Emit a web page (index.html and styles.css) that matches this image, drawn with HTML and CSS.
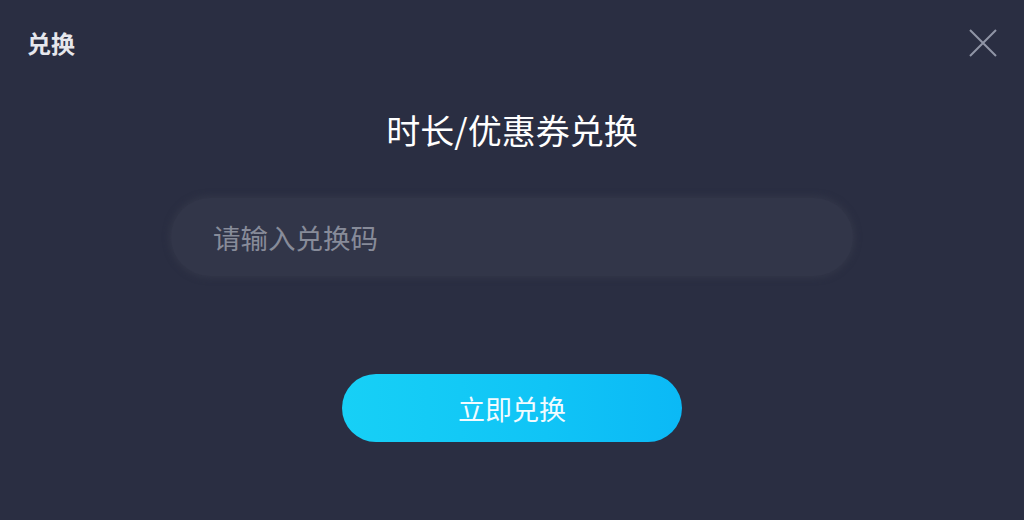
FILE: index.html
```html
<!DOCTYPE html>
<html lang="zh-CN">
<head>
<meta charset="utf-8">
<title>兑换</title>
<link rel="stylesheet" href="styles.css">
</head>
<body>
<div class="dialog">
  <header class="topbar">
    <div class="tab">兑换</div>
    <button class="close" aria-label="关闭">
      <svg width="28" height="28" viewBox="0 0 28 28"><path d="M1 1 L27 27 M27 1 L1 27" stroke="#9095a6" stroke-width="2" fill="none"/></svg>
    </button>
  </header>
  <main class="content">
    <h1 class="heading">时长/优惠券兑换</h1>
    <div class="field">
      <input class="code" type="text" placeholder="请输入兑换码">
    </div>
    <button class="submit">立即兑换</button>
  </main>
</div>
</body>
</html>
```
FILE: styles.css
```css
* { box-sizing: border-box; }
html, body { margin: 0; padding: 0; }
body {
  width: 1024px;
  height: 520px;
  background: #2a2e42;
  font-family: "Noto Sans CJK SC", "Noto Sans", sans-serif;
  overflow: hidden;
}
.dialog {
  width: 1024px;
  height: 520px;
  display: flex;
  flex-direction: column;
}
.topbar {
  display: flex;
  justify-content: space-between;
  align-items: center;
  padding: 27px 27px 0 27px;
  height: 58px;
}
.tab {
  color: #e6e7ec;
  font-size: 24px;
  font-weight: 700;
  line-height: 30px;
}
.close {
  background: none;
  border: 0;
  padding: 0;
  width: 28px;
  height: 28px;
  display: flex;
}
.content {
  display: flex;
  flex-direction: column;
  align-items: center;
}
.heading {
  margin: 49px 0 0 0;
  color: #ffffff;
  font-size: 34px;
  font-weight: 400;
  line-height: 46px;
}
.field {
  margin-top: 45px;
  width: 682px;
  height: 78px;
  border-radius: 39px;
  background: #323649;
  box-shadow: 0 0 6px 2px rgba(52, 56, 74, 0.8);
  display: flex;
  align-items: center;
  padding: 0 42px;
}
.code {
  width: 100%;
  border: 0;
  background: transparent;
  outline: none;
  font-family: inherit;
  font-size: 27.5px;
  color: #d0d2da;
  padding: 0;
}
.code::placeholder { color: #878b99; }
.submit {
  margin-top: 98px;
  width: 340px;
  height: 68px;
  border: 0;
  border-radius: 34px;
  background: linear-gradient(90deg, #17d0f6 0%, #10c4f6 60%, #0bb9f6 100%);
  color: #f2fbff;
  font-family: inherit;
  font-size: 27px;
  font-weight: 400;
  padding: 0;
}
```
